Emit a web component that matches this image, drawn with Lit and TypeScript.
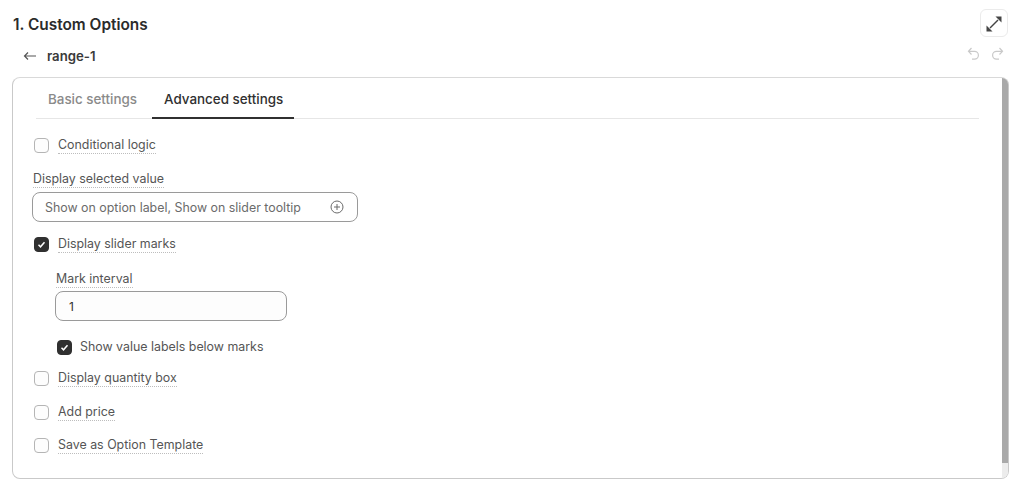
import { LitElement, html, css, svg } from 'lit';
import { customElement, property } from 'lit/decorators.js';

@customElement('check-row')
export class CheckRow extends LitElement {
  @property() label = '';
  @property({ type: Boolean }) checked = false;
  @property({ type: Boolean }) plain = false;

  static styles = css`
    :host { display: flex; align-items: center; gap: 9px; height: 20px; }
    .box {
      width: 15px; height: 15px; box-sizing: border-box;
      border: 1px solid #b5b5b5; border-radius: 4px; background: #fdfdfd;
      display: flex; align-items: center; justify-content: center;
    }
    .box.on { background: #303030; border-color: #303030; }
    .text { font-size: 12.4px; line-height: 16px; color: #555; border-bottom: 1px dotted #bdbdbd; }
    .text.plain { border-bottom: 0; margin-left: -1px; }
  `;

  render() {
    return html`
      <span class="box ${this.checked ? 'on' : ''}">
        ${this.checked
          ? html`<svg width="9" height="9" viewBox="0 0 9 9"><path d="M1.5 4.8 3.5 6.8 7.5 2.2" fill="none" stroke="#fff" stroke-width="1.5"/></svg>`
          : ''}
      </span>
      <span class="text ${this.plain ? 'plain' : ''}">${this.label}</span>
    `;
  }
}

const undoIcon = svg`<path d="M4.500 1 1.500 4.300 4.500 7.500M2 4.300h5.500a3.900 3.900 0 0 1 0 7.800H5" fill="none" stroke="#c9c9c9" stroke-width="1.200"/>`;
const redoIcon = svg`<path d="M8.500 1l3 3.300-3 3.200M11 4.300H5.500a3.900 3.900 0 0 0 0 7.800H8" fill="none" stroke="#c9c9c9" stroke-width="1.200"/>`;

@customElement('app-root')
export class AppRoot extends LitElement {
  static styles = css`
    :host {
      display: block; width: 1024px; height: 500px; overflow: hidden; box-sizing: border-box;
      background: #fff; font-family: Inter, "Liberation Sans", sans-serif; color: #303030;
      padding: 9px 15px 0 12px;
    }
    .head { display: flex; justify-content: space-between; height: 30px; }
    .title { font-size: 15.4px; font-weight: 600; line-height: 17px; margin: 7px 0 0 1px; color: #2b2b2b; }
    .expand {
      width: 28px; height: 28px; box-sizing: border-box; border: 1px solid #ebebeb; border-radius: 6px;
      display: flex; align-items: center; justify-content: center; margin-right: 1px;
    }
    .expand svg { margin-top: 2px; }
    .sub { display: flex; align-items: center; justify-content: space-between; height: 20px; margin-top: 7px; }
    .back { display: flex; align-items: center; gap: 10px; padding-left: 11px; font-size: 13.2px; font-weight: 600; color: #3a3a3a; }
    .history { display: flex; gap: 11px; padding-right: 5px; margin-top: -5px; }
    .card {
      margin-top: 11px; height: 402px; box-sizing: border-box; position: relative;
      border: 1px solid #c9c9c9; border-top-color: #d9d9d9; border-radius: 8px; padding: 0 29px 0 23px;
    }
    .tabs { display: flex; height: 41px; border-bottom: 1px solid #e6e6e6; box-sizing: border-box; }
    .tab { font-size: 13.4px; font-weight: 500; padding: 0 12px; line-height: 43px; color: #8a8a8a; margin-right: 3px; }
    .tab.active { color: #303030; border-bottom: 2px solid #303030; height: 41px; box-sizing: border-box; padding-right: 11px; }
    .form { display: flex; flex-direction: column; align-items: flex-start; padding-top: 16px; margin-left: -2px; }
    .field-label { font-size: 12.4px; line-height: 16px; color: #555; border-bottom: 1px dotted #bdbdbd; margin-left: -1px; }
    .select {
      width: 326px; height: 30px; box-sizing: border-box; border: 1px solid #9a9a9a; border-radius: 8px;
      display: flex; align-items: center; justify-content: space-between; padding: 0 13px 0 12px;
      font-size: 12.4px; color: #6b6b6b; margin: 4px 0 0 -2px;
    }
    .input {
      width: 232px; height: 30px; box-sizing: border-box; border: 1px solid #9a9a9a; border-radius: 8px;
      display: flex; align-items: center; padding: 0 13px; font-size: 12px; color: #303030; background: #fdfdfd; margin: 3px 0 0 -2px;
    }
    .nested { display: flex; flex-direction: column; align-items: flex-start; margin-left: 23px; }
    .gap-display { margin-top: 16px; }
    .gap-slider { margin-top: 12px; }
    .gap-mark { margin-top: 17px; }
    .gap-labels { margin-top: 16px; }
    .gap-qty { margin-top: 11px; }
    .gap-row { margin-top: 14px; }
    .gap-last { margin-top: 13px; }
    .scrollbar { position: absolute; top: 0; right: 0; bottom: 0; width: 6px; background: #ececec; border-radius: 0 8px 8px 0; overflow: hidden; }
    .thumb { height: 385px; background: #a9a9a9; }
  `;

  render() {
    return html`
      <div class="head">
        <div class="title">1. Custom Options</div>
        <div class="expand">
          <svg width="18" height="18" viewBox="0 0 18 18" fill="#444">
            <path d="M5 13 13 5" stroke="#444" stroke-width="1.400"/>
            <path d="M10.500 1.500h6v6z"/>
            <path d="M1.500 10.500v6h6z"/>
          </svg>
        </div>
      </div>
      <div class="sub">
        <div class="back">
          <svg width="14" height="12" viewBox="0 0 14 12"><path d="M5 2.500 1.500 6 5 9.500M1.500 6h11.500" fill="none" stroke="#555" stroke-width="1.200"/></svg>
          <span>range-1</span>
        </div>
        <div class="history">
          <svg width="13" height="14" viewBox="0 0 13 14">${undoIcon}</svg>
          <svg width="13" height="14" viewBox="0 0 13 14">${redoIcon}</svg>
        </div>
      </div>
      <div class="card">
        <div class="tabs">
          <div class="tab">Basic settings</div>
          <div class="tab active">Advanced settings</div>
        </div>
        <div class="form">
          <check-row label="Conditional logic"></check-row>
          <div class="field-label gap-display">Display selected value</div>
          <div class="select">
            <span>Show on option label, Show on slider tooltip</span>
            <svg width="14" height="14" viewBox="0 0 14 14" fill="none" stroke="#6b6b6b" stroke-width="1"><circle cx="7" cy="7" r="6"/><path d="M7 4v6M4 7h6"/></svg>
          </div>
          <check-row class="gap-slider" label="Display slider marks" checked></check-row>
          <div class="nested gap-mark">
            <div class="field-label">Mark interval</div>
            <div class="input">1</div>
            <check-row class="gap-labels" label="Show value labels below marks" checked plain></check-row>
          </div>
          <check-row class="gap-qty" label="Display quantity box"></check-row>
          <check-row class="gap-row" label="Add price"></check-row>
          <check-row class="gap-last" label="Save as Option Template"></check-row>
        </div>
        <div class="scrollbar"><div class="thumb"></div></div>
      </div>
    `;
  }
}
